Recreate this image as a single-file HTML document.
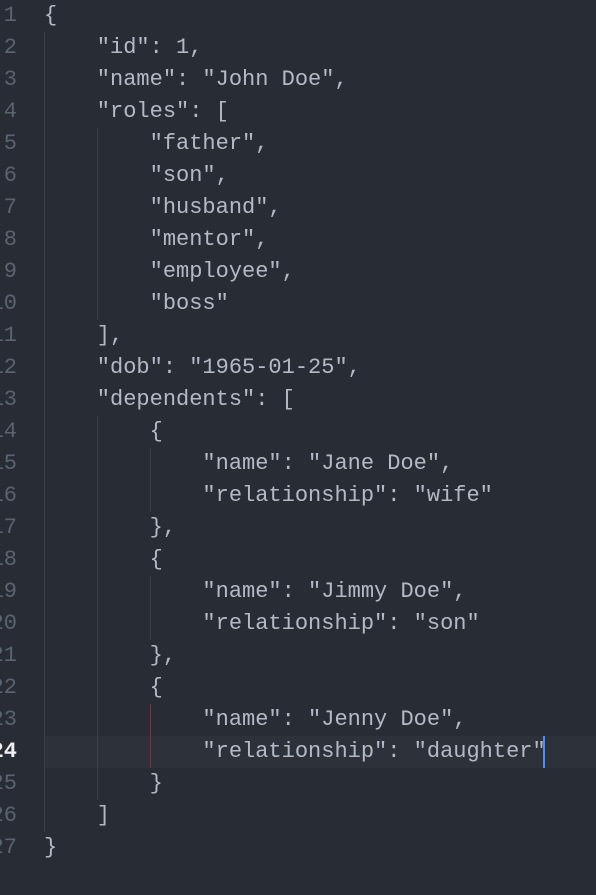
<!DOCTYPE html>
<html><head><style>
html,body{margin:0;padding:0;background:#282c34;width:596px;height:895px;overflow:hidden}
.l{position:absolute;left:0;width:596px;height:32px;line-height:32px;font-family:"Liberation Mono",monospace;font-size:22px;color:#b4bac5;white-space:pre}
.n{position:absolute;left:-20px;width:37px;text-align:right;color:#5c6370}
.t{position:absolute;left:44px}
.g{position:absolute;width:1px;background:#3b4048}
</style></head><body>
<div style="position:absolute;left:44px;top:736px;width:552px;height:32px;background:#2c313a"></div>
<div id="c"></div>
<script>
var L=['{','    "id": 1,','    "name": "John Doe",','    "roles": [','        "father",','        "son",','        "husband",','        "mentor",','        "employee",','        "boss"','    ],','    "dob": "1965-01-25",','    "dependents": [','        {','            "name": "Jane Doe",','            "relationship": "wife"','        },','        {','            "name": "Jimmy Doe",','            "relationship": "son"','        },','        {','            "name": "Jenny Doe",','            "relationship": "daughter"','        }','    ]','}'];
var h='';
L.forEach(function(s,i){var n=i+1;h+='<div class="l" style="top:'+(i*32)+'px"><span class="n"'+(n==24?' style="color:#f0f0f0;font-weight:bold"':'')+'>'+n+'</span><span class="t">'+s.replace(/&/g,'&amp;').replace(/</g,'&lt;')+'</span></div>';});
function g(x,a,b,c){h+='<div class="g" style="left:'+x+'px;top:'+((a-1)*32)+'px;height:'+((b-a+1)*32)+'px'+(c?';background:'+c:'')+'"></div>';}
g(44,2,26);g(97,5,10);g(97,14,25);g(150,15,16);g(150,19,20);g(150,23,24,'#6b3a3e');
h+='<div style="position:absolute;left:543px;top:736px;width:2px;height:32px;background:#528bff"></div>';
document.getElementById('c').innerHTML=h;
</script>
</body></html>
